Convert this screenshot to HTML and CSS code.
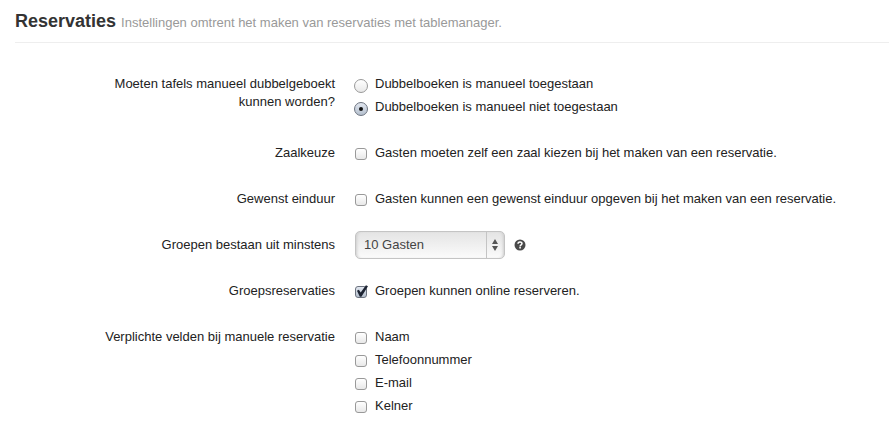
FILE: index.html
```html
<!DOCTYPE html>
<html lang="nl">
  <head>
    <meta charset="UTF-8" />
    <meta name="viewport" content="width=device-width, initial-scale=1.0" />
    <title>Reservaties</title>
    <link rel="stylesheet" href="styles.css">
  </head>
  <body>
    <form class="settings">
      <h3 class="legend">Reservaties <small>Instellingen omtrent het maken van reservaties met tablemanager.</small></h3>

      <div class="control-group" role="radiogroup" aria-labelledby="double-label">
        <div class="control-label" id="double-label">Moeten tafels manueel dubbelgeboekt kunnen worden?</div>
        <div class="controls">
          <label class="option"><input type="radio" name="double_booking" value="1" /> Dubbelboeken is manueel toegestaan</label>
          <label class="option"><input type="radio" name="double_booking" value="0" checked /> Dubbelboeken is manueel niet toegestaan</label>
        </div>
      </div>

      <div class="control-group">
        <label class="control-label" for="room">Zaalkeuze</label>
        <div class="controls">
          <label class="option"><input type="checkbox" id="room" name="room" /> Gasten moeten zelf een zaal kiezen bij het maken van een reservatie.</label>
        </div>
      </div>

      <div class="control-group">
        <label class="control-label" for="end-time">Gewenst einduur</label>
        <div class="controls">
          <label class="option"><input type="checkbox" id="end-time" name="end_time" /> Gasten kunnen een gewenst einduur opgeven bij het maken van een reservatie.</label>
        </div>
      </div>

      <div class="control-group">
        <label class="control-label" for="group-size">Groepen bestaan uit minstens</label>
        <div class="controls select-row">
          <div class="select">
            <select id="group-size" name="group_size">
              <option>10 Gasten</option>
            </select>
            <svg class="arrows" width="6" height="12" viewBox="0 0 6 12" aria-hidden="true">
              <path d="M3 0l3 5H0zM3 12l3-5H0z" fill="#555" />
            </svg>
          </div>
          <svg class="help" width="12" height="12" viewBox="0 0 12 12" aria-hidden="true">
            <circle cx="6" cy="6" r="5.5" fill="#4a4a4a" />
            <path d="M4 4.8C4 2.3 8 2.3 8 4.6 8 5.9 6.1 5.9 6.1 7.4" fill="none" stroke="#fff" stroke-width="1.5" />
            <path d="M5.3 8.1h1.6v1.5H5.3z" fill="#fff" />
          </svg>
        </div>
      </div>

      <div class="control-group">
        <label class="control-label" for="group-online">Groepsreservaties</label>
        <div class="controls">
          <label class="option"><input type="checkbox" id="group-online" name="group_online" checked /> Groepen kunnen online reserveren.</label>
        </div>
      </div>

      <div class="control-group" role="group" aria-labelledby="required-label">
        <div class="control-label" id="required-label">Verplichte velden bij manuele reservatie</div>
        <div class="controls">
          <label class="option"><input type="checkbox" name="required_name" /> Naam</label>
          <label class="option"><input type="checkbox" name="required_phone" /> Telefoonnummer</label>
          <label class="option"><input type="checkbox" name="required_email" /> E-mail</label>
          <label class="option"><input type="checkbox" name="required_waiter" /> Kelner</label>
        </div>
      </div>
    </form>
  </body>
</html>
```
FILE: styles.css
```css
body {
  margin: 0;
  background-color: #fff;
  color: #222;
  font-family: "Helvetica Neue", Helvetica, "Liberation Sans", Arial, sans-serif;
  font-size: 13px;
  line-height: 18px;
}

.settings {
  padding: 6px 0 0 15px;
}

.legend {
  margin: 0 0 27px;
  padding-bottom: 4px;
  border-bottom: 1px solid #eee;
  color: #333;
  font-size: 18px;
  line-height: 30px;
}

.legend small {
  color: #999;
  font-size: 13px;
  font-weight: normal;
}

.control-group {
  display: flex;
  gap: 20px;
  margin-bottom: 18px;
}

.control-label {
  box-sizing: border-box;
  width: 320px;
  flex-shrink: 0;
  padding: 5px 0 0 80px;
  text-align: right;
}

.controls {
  flex: 1;
  padding-top: 5px;
}

.select-row {
  display: flex;
  align-items: center;
  gap: 9px;
  padding-top: 0;
}

.option {
  display: flex;
  align-items: flex-start;
  gap: 8px;
  margin-bottom: 5px;
}

.option input {
  appearance: none;
  box-sizing: border-box;
  position: relative;
  flex-shrink: 0;
  width: 12px;
  height: 12px;
  margin: 4px 0 0;
  border: 1px solid #999;
  border-radius: 3px;
  background: linear-gradient(#fff, #e8e8e8);
}

.option input[type="radio"] {
  width: 14px;
  height: 14px;
  margin: 4px -1px 0;
  border-radius: 50%;
}

.option input:checked {
  border-color: #6c737f;
  background: linear-gradient(#e2e7f0, #b4bfcd);
}

/* dot */
.option input[type="radio"]:checked::before {
  content: "";
  position: absolute;
  top: 4px;
  left: 4px;
  width: 4px;
  height: 4px;
  border-radius: 50%;
  background: #111;
}

/* check mark, sticks out of the box a little */
.option input[type="checkbox"]:checked::before {
  content: "";
  position: absolute;
  top: -2px;
  left: 0;
  width: 12px;
  height: 12px;
  background: #1d2433;
  clip-path: polygon(8% 48%, 24% 40%, 39% 62%, 83% 3%, 100% 10%, 45% 97%, 32% 97%);
}

.select {
  position: relative;
}

.select select {
  appearance: none;
  display: block;
  box-sizing: border-box;
  width: 150px;
  height: 28px;
  padding: 0 26px 0 8px;
  border: 1px solid #c4c4c4;
  border-radius: 5px;
  background: linear-gradient(#c4c4c4, #c4c4c4) right 17px top / 1px 100% no-repeat,
    linear-gradient(#e4e4e4, #fbfbfb);
  box-shadow: inset 3px 0 3px -2px #ccc, inset -3px 0 3px -2px #ccc;
  color: #444;
  font: inherit;
}

.arrows {
  position: absolute;
  top: 8px;
  right: 7px;
  pointer-events: none;
}
```
